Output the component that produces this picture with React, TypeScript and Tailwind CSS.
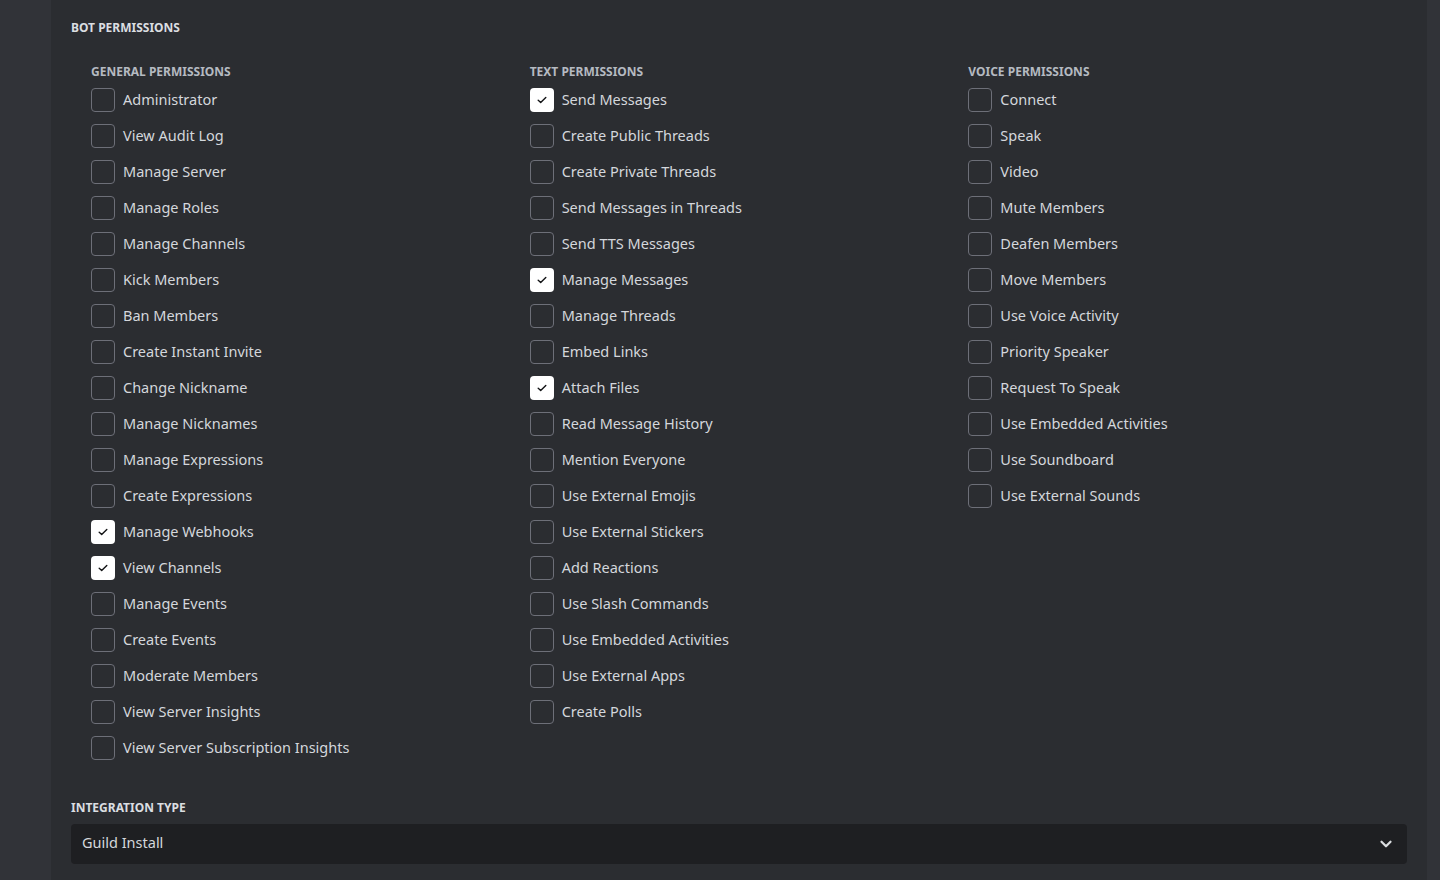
import { ChevronDown } from "lucide-react";

const general: [string, boolean][] = [
  ["Administrator", false],
  ["View Audit Log", false],
  ["Manage Server", false],
  ["Manage Roles", false],
  ["Manage Channels", false],
  ["Kick Members", false],
  ["Ban Members", false],
  ["Create Instant Invite", false],
  ["Change Nickname", false],
  ["Manage Nicknames", false],
  ["Manage Expressions", false],
  ["Create Expressions", false],
  ["Manage Webhooks", true],
  ["View Channels", true],
  ["Manage Events", false],
  ["Create Events", false],
  ["Moderate Members", false],
  ["View Server Insights", false],
  ["View Server Subscription Insights", false],
];

const text: [string, boolean][] = [
  ["Send Messages", true],
  ["Create Public Threads", false],
  ["Create Private Threads", false],
  ["Send Messages in Threads", false],
  ["Send TTS Messages", false],
  ["Manage Messages", true],
  ["Manage Threads", false],
  ["Embed Links", false],
  ["Attach Files", true],
  ["Read Message History", false],
  ["Mention Everyone", false],
  ["Use External Emojis", false],
  ["Use External Stickers", false],
  ["Add Reactions", false],
  ["Use Slash Commands", false],
  ["Use Embedded Activities", false],
  ["Use External Apps", false],
  ["Create Polls", false],
];

const voice: [string, boolean][] = [
  ["Connect", false],
  ["Speak", false],
  ["Video", false],
  ["Mute Members", false],
  ["Deafen Members", false],
  ["Move Members", false],
  ["Use Voice Activity", false],
  ["Priority Speaker", false],
  ["Request To Speak", false],
  ["Use Embedded Activities", false],
  ["Use Soundboard", false],
  ["Use External Sounds", false],
];

function Box({ checked }: { checked: boolean }) {
  if (checked) {
    return (
      <span className="w-6 h-6 rounded bg-white flex items-center justify-center shrink-0">
        <svg width="12" height="12" viewBox="0 0 12 12" fill="none">
          <path d="M2.2 6.3 4.7 8.6 9.8 3.6" stroke="#111214" strokeWidth="1.4" strokeLinecap="round" strokeLinejoin="round" />
        </svg>
      </span>
    );
  }
  return <span className="w-6 h-6 rounded border border-[#6d6f78] shrink-0" />;
}

function Column({ title, items }: { title: string; items: [string, boolean][] }) {
  return (
    <div>
      <h3 className="text-xs font-bold uppercase text-[#b5bac1] leading-4 mb-2">{title}</h3>
      <div className="flex flex-col gap-3">
        {items.map(([label, on]) => (
          <label key={label} className="flex items-center gap-2 h-6 cursor-pointer">
            <Box checked={on} />
            <span className="text-[14.5px] text-[#d4d7dc] leading-5 -mt-0.5">{label}</span>
          </label>
        ))}
      </div>
    </div>
  );
}

export default function App() {
  return (
    <div
      className="min-h-[880px] bg-[#313338] flex pl-[51px] pr-[13px]"
      style={{ fontFamily: '"Noto Sans", "Open Sans", sans-serif' }}
    >
      <div className="flex-1 bg-[#2b2d31] px-5 pt-5 pb-4">
        <h2 className="text-xs font-bold uppercase text-[#dbdee1] leading-4 mb-7">Bot Permissions</h2>

        <div className="grid grid-cols-3 pl-5">
          <Column title="General Permissions" items={general} />
          <Column title="Text Permissions" items={text} />
          <Column title="Voice Permissions" items={voice} />
        </div>

        <h2 className="text-xs font-bold uppercase text-[#dbdee1] leading-4 mt-10 mb-2">Integration Type</h2>
        <button className="w-full h-10 rounded bg-[#1e1f22] flex items-center justify-between pl-[11px] pr-3 text-[14.5px] text-[#d4d7dc]">
          <span className="-mt-0.5">Guild Install</span>
          <ChevronDown size={18} strokeWidth={3} className="text-[#dbdee1]" />
        </button>
      </div>
    </div>
  );
}
